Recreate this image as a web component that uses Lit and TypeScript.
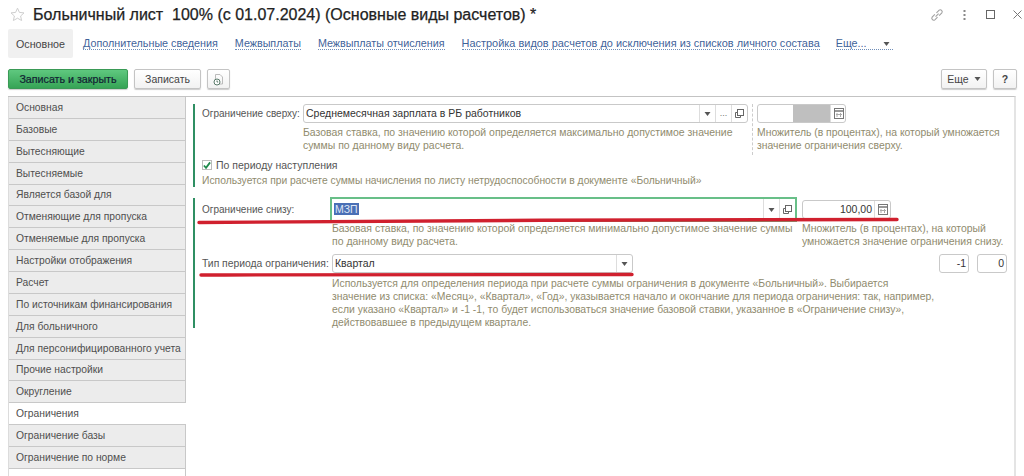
import { LitElement, html, css, svg } from "lit";
import { customElement } from "lit/decorators.js";

const TABS = ["Основная","Базовые","Вытесняющие","Вытесняемые","Является базой для","Отменяющие для пропуска","Отменяемые для пропуска","Настройки отображения","Расчет","По источникам финансирования","Для больничного","Для персонифицированного учета","Прочие настройки","Округление","Ограничения","Ограничение базы","Ограничение по норме"];
const LINKS = ["Дополнительные сведения","Межвыплаты","Межвыплаты отчисления","Настройка видов расчетов до исключения из списков личного состава"];

const arrow = html`<svg class="ic" width="7" height="4" viewBox="0 0 7 4"><path d="M0.5 0H6.5L3.5 4Z" fill="#555"/></svg>`;
const copy = html`<svg class="ic" width="11" height="11" viewBox="0 0 11 11" fill="none" stroke="#666"><rect x="3.5" y="1.5" width="6" height="6" fill="#fff"/><path d="M3.5 4.5H1.5V9.5H6.5V7.5"/></svg>`;
const calc = html`<svg class="ic" width="10" height="11" viewBox="0 0 10 11" fill="none" stroke="#777"><rect x=".5" y=".5" width="9" height="10"/><path d="M.5 3H9.5" stroke-width="1.5"/><path d="M3 5V9M6.5 5V9M2 6.5H8" stroke="#aaa"/></svg>`;

@customElement("app-root")
export class AppRoot extends LitElement {
  static styles = css`
    :host { display:block; position:relative; width:1024px; height:476px; overflow:hidden; background:#fff; font-family:"Liberation Sans",Arial,sans-serif; color:#4c4c4c; font-size:10.5px; }
    .title { height:29px; display:flex; align-items:center; padding:0 2px 0 10px; }
    .title h1 { margin:0 0 0 8px; font-size:16px; font-weight:400; color:#222; white-space:pre; -webkit-text-stroke:.25px #222; flex:1; }
    .winicons { display:flex; align-items:center; }
    .w-kebab { margin-left:19px; }
    .w-square { margin-left:20px; }
    .w-close { margin-left:18px; }
    .nav { height:29px; display:flex; align-items:center; padding-left:8px; }
    .nav .cur { height:29px; width:65px; background:#f0f0f0; border-radius:2px; display:flex; align-items:center; justify-content:center; margin-right:10px; color:#444; font-size:10.7px; }
    .nav a { color:#3f639a; border-bottom:1px dotted #6f8db8; line-height:11px; margin-right:17px; font-size:10.75px; white-space:nowrap; }
    .nav > a:last-of-type { font-size:10.95px; margin-right:16px; }
    .nav .more { position:relative; display:flex; align-items:center; }
    .nav .more a { margin:0; padding-right:26px; }
    .nav .more svg { position:absolute; right:3px; top:4px; }
    .toolbar { height:20px; margin-top:11px; display:flex; align-items:stretch; padding:0 7px 0 8px; gap:6px; }
    .btn { box-sizing:border-box; border:1px solid #c4c4c4; border-radius:2px; background:linear-gradient(#fff,#f2f2f2); box-shadow:0 1px 1px #ccc; display:flex; align-items:center; justify-content:center; color:#444; font-size:10.5px; }
    .primary { width:120px; background:linear-gradient(#5fc87f,#36a456); border-color:#3a9a56; color:#123; -webkit-text-stroke:.2px #123; font-size:10.7px; }
    .save { width:67px; }
    .hist { width:23px; }
    .spacer { flex:1; }
    .eshe { width:46px; gap:5px; }
    .q { width:24px; font-weight:700; }
    .panel { position:absolute; left:8px; top:96px; width:1006px; height:380px; display:flex; border-top:1px solid #c3c3c3; border-right:2px solid #e4e4e4; }
    .tabs { width:178px; box-sizing:border-box; flex:none; display:flex; flex-direction:column; border-left:1px solid #dcdcdc; border-right:1px solid #c8c8c8; }
    .tab { box-sizing:border-box; height:21.875px; flex:none; padding-left:7px; display:flex; align-items:center; background:#ececec; border-bottom:1px solid #c8c8c8; color:#4f4f4f; font-size:10.3px; white-space:nowrap; }
    .tab.on { background:#fff; margin-right:-1px; }
    .tab.rest { flex:1; background:#fff; border:0; }
    .content { flex:1; padding:7px 0 0 7px; }
    .group { border-left:2px solid #2f8f63; padding-left:7px; box-sizing:border-box; }
    .g1 { height:83px; display:flex; flex-direction:column; }
    .g2 { height:130px; margin-top:11px; display:flex; flex-direction:column; padding-top:2px; }
    .grid { display:grid; align-items:start; }
    .g1 .grid { grid-template-columns:101px 445px 9px 89px 120px; grid-template-rows:19px 32px; }
    .g2 .grid { grid-template-columns:130px 463px 7px 130px; grid-template-rows:19px 34px; }
    .lbl { line-height:19px; color:#555; white-space:nowrap; font-size:10.35px; }
    .lbl.tight { font-size:10px; }
    .field { box-sizing:border-box; height:19px; border:1px solid #c9c9c9; border-radius:3px; background:#fff; display:flex; align-items:stretch; color:#333; }
    .val { flex:1; padding:0 2px; line-height:17px; min-width:0; white-space:nowrap; font-size:10.5px; }
    .val.r { text-align:right; padding-right:2px; }
    .blank { flex:none; width:35px; }
    .cell { width:15px; flex:none; border-left:1px solid #ddd; display:flex; align-items:center; justify-content:center; color:#777; }
    .cell.plain { line-height:17px; font-size:9px; }
    .gray { width:37px; flex:none; background:#bfbfbf; }
    .c1 { grid-column:1; grid-row:1; }
    .c2 { grid-column:2; grid-row:1; }
    .c4 { grid-column:4; grid-row:1; }
    .sep { grid-column:3; grid-row:1 / span 2; align-self:stretch; width:0; margin-left:4px; border-left:1px dashed #ccc; }
    .hint { color:#908b6e; line-height:13px; padding-top:3px; font-size:10.47px; white-space:nowrap; }
    .h-col { grid-column:2; grid-row:2; }
    .h-mult { grid-column:4 / span 2; grid-row:2; font-size:10.4px; }
    .h-low { grid-column:4; grid-row:2; }
    .check { display:flex; align-items:center; gap:4px; height:14px; margin-top:3px; color:#555; }
    .box { width:10px; height:10px; box-sizing:border-box; border:1px solid #bbb; background:#fff; display:flex; }
    .note { color:#908b6e; line-height:13px; margin-top:2px; font-size:10.3px; white-space:nowrap; }
    .focus { outline:2px solid #68bf88; border:0; border-radius:0; margin-top:-1px; height:21px; }
    .focus .val { line-height:21px; }
    .sel { background:#4a6fb5; color:#dfe6f5; padding:0 1px; }
    .row3 { display:flex; height:19px; margin-top:1px; }
    .row3 .lbl { width:130px; flex:none; }
    .kind { width:301px; }
    .right { margin-left:auto; display:flex; gap:8px; margin-right:7px; }
    .small { width:30px; }
    .hint2 { margin-left:130px; padding-top:4px; font-size:10.4px; }
    .marks { position:absolute; left:0; top:0; pointer-events:none; }
  `;

  render() {
    return html`
      <div class="title">
        <svg width="15" height="15" viewBox="0 0 15 15" fill="none" stroke="#cfcfcf"><path d="M7.5 1.2l1.9 4.2 4.6.5-3.4 3.1 1 4.5-4.1-2.3-4.1 2.3 1-4.5L1 5.9l4.6-.5z"/></svg>
        <h1>Больничный лист  100% (с 01.07.2024) (Основные виды расчетов) *</h1>
        <div class="winicons">
          <svg width="14" height="14" viewBox="0 0 13 13" fill="none" stroke="#a0a0a0"><path d="M5.2 8 8 5.2M4.5 6 2 8.5a1.8 1.8 0 0 0 2.5 2.5L7 8.5M6 4.5 8.5 2A1.8 1.8 0 0 1 11 4.5L8.5 7"/></svg>
          <svg class="w-kebab" width="3" height="10" viewBox="0 0 3 10" fill="#888"><rect x=".5" width="2" height="2"/><rect x=".5" y="4" width="2" height="2"/><rect x=".5" y="8" width="2" height="2"/></svg>
          <svg class="w-square" width="9" height="9" viewBox="0 0 9 9" fill="none" stroke="#666"><rect x=".5" y=".5" width="8" height="8"/></svg>
          <svg class="w-close" width="9" height="9" viewBox="0 0 9 9" fill="none" stroke="#777"><path d="M.5.5l8 8M8.5.5l-8 8"/></svg>
        </div>
      </div>
      <div class="nav">
        <div class="cur">Основное</div>
        ${LINKS.map((l) => html`<a>${l}</a>`)}
        <div class="more"><a>Еще...</a>${arrow}</div>
      </div>
      <div class="toolbar">
        <div class="btn primary">Записать и закрыть</div>
        <div class="btn save">Записать</div>
        <div class="btn hist"><svg width="13" height="13" viewBox="0 0 13 13" fill="none"><path d="M3.5 1.5H8L10.5 4V11H3.5Z" stroke="#bbb"/><circle cx="5" cy="9" r="3" fill="#fff" stroke="#5a7a6a"/><path d="M5 7.5V9H6.2" stroke="#5a7a6a"/></svg></div>
        <div class="spacer"></div>
        <div class="btn eshe">Еще ${arrow}</div>
        <div class="btn q">?</div>
      </div>
      <div class="panel">
        <div class="tabs">
          ${TABS.map((t) => html`<div class="tab ${t === "Ограничения" ? "on" : ""}">${t}</div>`)}
          <div class="tab rest"></div>
        </div>
        <div class="content">
          <div class="group g1">
            <div class="grid">
              <div class="lbl tight c1">Ограничение сверху:</div>
              <div class="field c2">
                <div class="val">Среднемесячная зарплата в РБ работников</div>
                <div class="cell">${arrow}</div><div class="cell plain">...</div><div class="cell">${copy}</div>
              </div>
              <div class="sep"></div>
              <div class="field c4">
                <div class="blank"></div><div class="gray"></div><div class="cell">${calc}</div>
              </div>
              <div class="hint h-col">Базовая ставка, по значению которой определяется максимально допустимое значение<br>суммы по данному виду расчета.</div>
              <div class="hint h-mult">Множитель (в процентах), на который умножается<br>значение ограничения сверху.</div>
            </div>
            <div class="check">
              <div class="box"><svg width="9" height="9" viewBox="0 0 9 9" fill="none" stroke="#1f8a4c" stroke-width="2"><path d="M1 4.5l2.4 2.6L8 1"/></svg></div>
              По периоду наступления
            </div>
            <div class="note">Используется при расчете суммы начисления по листу нетрудоспособности в документе «Больничный»</div>
          </div>
          <div class="group g2">
            <div class="grid">
              <div class="lbl tight c1">Ограничение снизу:</div>
              <div class="field focus c2">
                <div class="val"><span class="sel">МЗП</span></div>
                <div class="cell">${arrow}</div><div class="cell">${copy}</div>
              </div>
              <div class="field c4" style="width:89px">
                <div class="val r">100,00</div><div class="cell">${calc}</div>
              </div>
              <div class="hint h-col">Базовая ставка, по значению которой определяется минимально допустимое значение суммы<br>по данному виду расчета.</div>
              <div class="hint h-low">Множитель (в процентах), на который<br>умножается значение ограничения снизу.</div>
            </div>
            <div class="row3">
              <div class="lbl">Тип периода ограничения:</div>
              <div class="field kind"><div class="val">Квартал</div><div class="cell">${arrow}</div></div>
              <div class="right">
                <div class="field small"><div class="val r">-1</div></div>
                <div class="field small"><div class="val r">0</div></div>
              </div>
            </div>
            <div class="hint hint2">Используется для определения периода при расчете суммы ограничения в документе «Больничный». Выбирается<br>значение из списка: «Месяц», «Квартал», «Год», указывается начало и окончание для периода ограничения: так, например,<br>если указано «Квартал» и -1 -1, то будет использоваться значение базовой ставки, указанное в «Ограничение снизу»,<br>действовавшее в предыдущем квартале.</div>
          </div>
        </div>
      </div>
      <svg class="marks" width="1024" height="476" fill="none" stroke="#d0202e" stroke-width="3.4" stroke-linecap="round">
        ${svg`<path d="M199 222.5C400 220.5 700 219.5 897 219.5"/><path d="M201 275C350 274.5 500 274.5 632 274.5"/>`}
      </svg>
    `;
  }
}
